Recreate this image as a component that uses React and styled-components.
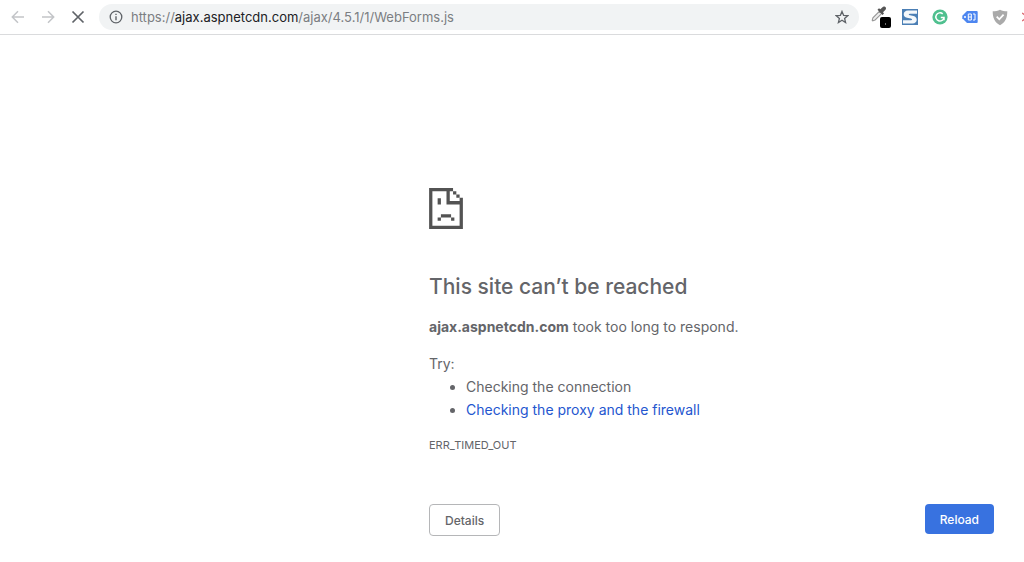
import React from "react";
import styled, { createGlobalStyle } from "styled-components";

const GlobalStyle = createGlobalStyle`
  * {
    box-sizing: border-box;
  }

  body {
    margin: 0;
    background: #fff;
    color: #646569;
    font-family: Inter, Roboto, "Liberation Sans", sans-serif;
    overflow-x: hidden;
  }
`;

const Toolbar = styled.header`
  display: flex;
  align-items: center;
  height: 35px;
  padding-left: 8px;
  border-bottom: 1px solid #dadbdd;
  overflow: hidden;
`;

const IconButton = styled.button`
  display: flex;
  flex: none;
  align-items: center;
  justify-content: ${props => (props.$clipped ? "flex-start" : "center")};
  width: ${props => props.$width || 30}px;
  height: 26px;
  padding: 0;
  border: 0;
  background: none;
  color: ${props => props.$color || "#5f6368"};

  svg {
    display: block;
    flex: none;
  }
`;

const AddressBar = styled.div`
  display: flex;
  flex: 1;
  align-items: center;
  gap: 8px;
  height: 26px;
  margin: 0 6px 0 11px;
  padding: 0 2px 0 10px;
  border-radius: 13px;
  background: #f1f3f4;
`;

const Url = styled.div`
  flex: 1;
  color: #7b7e82;
  font-size: 13px;
  line-height: 20px;
  white-space: nowrap;

  span {
    color: #202124;
  }
`;

const Page = styled.main`
  display: flex;
  justify-content: flex-end;
  padding: 153px 30px 24px;
`;

const Content = styled.div`
  width: 100%;
  max-width: 566px;
  padding-left: 1px;
`;

const SadPage = styled.svg`
  display: block;
  width: 34px;
  height: 41px;
`;

const Heading = styled.h1`
  margin: 43px 0 0;
  font-size: 21px;
  font-weight: 500;
  line-height: 30px;
`;

const Text = styled.p`
  margin: ${props => props.$top}px 0 0;
  font-size: ${props => (props.$small ? 11 : 14)}px;
  line-height: 22px;
`;

const Suggestions = styled.ul`
  margin: 0;
  padding-left: 37px;
  font-size: 14px;
  line-height: 23px;

  a {
    color: #2456cf;
    text-decoration: none;
  }
`;

const Actions = styled.div`
  display: flex;
  align-items: flex-start;
  justify-content: space-between;
  margin-top: 48px;
`;

const Button = styled.button`
  height: ${props => (props.$primary ? 30 : 32)}px;
  padding: 0 15px;
  border: ${props => (props.$primary ? "0" : "1px solid #b5b6b8")};
  border-radius: 4px;
  background: ${props => (props.$primary ? "#3872e0" : "#fff")};
  color: ${props => (props.$primary ? "#fff" : "#646569")};
  font-family: inherit;
  font-size: 12px;
  font-weight: 500;
`;

const Arrow = ({ forward }) => (
  <svg width="14" height="14" viewBox="0 0 14 14" fill="none" stroke="currentColor" strokeWidth="1.5">
    <path d={forward ? "M1 7h11.5M7 1.3 12.7 7 7 12.7" : "M13 7H1.5M7 1.3 1.3 7 7 12.7"} />
  </svg>
);

const Close = () => (
  <svg width="14" height="14" viewBox="0 0 14 14" fill="none" stroke="currentColor" strokeWidth="1.7">
    <path d="M1.5 1.5l11 11M12.5 1.5l-11 11" />
  </svg>
);

const Info = () => (
  <svg width="14" height="14" viewBox="0 0 14 14" fill="none" stroke="#5f6368">
    <circle cx="7" cy="7" r="5.8" strokeWidth="1.3" />
    <path d="M7 6.2v4M7 3.7v1.4" strokeWidth="1.4" />
  </svg>
);

const Star = () => (
  <svg width="14" height="14" viewBox="0 0 14 14" fill="none" stroke="currentColor" strokeWidth="1.3">
    <path d="M7 1.4l1.6 3.9 4.2.3-3.2 2.8 1 4.1L7 10.3l-3.6 2.2 1-4.1-3.2-2.8 4.2-.3z" />
  </svg>
);

const Picker = () => (
  <svg width="22" height="24" viewBox="0 0 22 24">
    <path d="M3.2 15.3l.7-2.4 6.5-6.5 2.2 2.2-6.5 6.4-2.4.8z" fill="#eee" stroke="#999" strokeWidth="1.1" />
    <path d="M8.500 4.800l1.500-1.500 1.300 1 2.200-2.100c1.700-1.700 4.800.6 3 2.600l-2.500 2.400 1 1.200-1.500 1.500z" fill="#555" />
    <rect x="11" y="12" width="11" height="11" rx="2" />
    <path d="M16 18.500h1v1h-1z" fill="#ddd" />
  </svg>
);

const Snippet = () => (
  <svg width="16" height="16" viewBox="0 0 16 16">
    <path fill="#4b7fb5" d="M0 0h16v16H0z" />
    <path
      fill="#f4f8fb"
      d="M15 1.500v3.300H8C6.300 4.800 6.300 6 8 6.300l3.500.7c4.700 1 4.200 7.500-1 7.500H1v-3.300h7.500c2 0 2.200-1.300.3-1.700L5 8.700C.2 7.700.8 1.500 6 1.500z"
    />
  </svg>
);

const Grammar = () => (
  <svg width="16" height="16" viewBox="0 0 16 16">
    <circle cx="8" cy="8" r="7.6" fill="#4fc08f" />
    <path d="M10.7 4.9A4.1 4.1 0 1 0 12 8.500H8.800M12 8.500v2.700" fill="none" stroke="#fff" strokeWidth="1.5" />
  </svg>
);

const Tag = () => (
  <svg width="16" height="14" viewBox="0 0 16 14">
    <path d="M5 1h9.5c.8 0 1.2.4 1.2 1.2v9.600c0 .8-.4 1.200-1.200 1.200H5L.3 8.200V5.800z" fill="#4d86f0" />
    <circle cx="3" cy="7" r="1" fill="#fff" />
    <path d="M6.300 4v6h3V4zM6.300 7h3M11 4h2v6h-2" fill="none" stroke="#fff" strokeWidth="1" />
  </svg>
);

const Shield = () => (
  <svg width="16" height="17" viewBox="0 0 16 17">
    <path d="M8 .8c2.200 1.200 4.500 1.500 7.300 1.500 0 6.500-1.800 11-7.300 13.900C2.500 13.300.7 8.800.7 2.300 3.500 2.300 5.800 2 8 .8z" fill="#aaa" />
    <path d="M4.700 7.600l2.600 2.700 4.300-4.700" fill="none" stroke="#fff" strokeWidth="1.8" />
  </svg>
);

const Clipped = () => (
  <svg width="12" height="12" viewBox="0 0 12 12" fill="none" stroke="#dc6b72" strokeWidth="1.4">
    <path d="M0 2l3 2M0 10l3-2" />
  </svg>
);

export default function App() {
  return (
    <>
      <GlobalStyle />
      <Toolbar>
        <IconButton $width={20} $color="#c3c5c8" aria-label="Back" disabled>
          <Arrow />
        </IconButton>
        <IconButton $width={40} $color="#c3c5c8" aria-label="Forward" disabled>
          <Arrow forward />
        </IconButton>
        <IconButton $width={20} aria-label="Stop loading">
          <Close />
        </IconButton>
        <AddressBar>
          <Info />
          <Url>
            https://<span>ajax.aspnetcdn.com</span>/ajax/4.5.1/1/WebForms.js
          </Url>
          <IconButton aria-label="Bookmark this page">
            <Star />
          </IconButton>
        </AddressBar>
        <IconButton aria-label="Colour picker">
          <Picker />
        </IconButton>
        <IconButton aria-label="Snippets">
          <Snippet />
        </IconButton>
        <IconButton aria-label="Grammar check">
          <Grammar />
        </IconButton>
        <IconButton aria-label="Tags">
          <Tag />
        </IconButton>
        <IconButton aria-label="Protection">
          <Shield />
        </IconButton>
        <IconButton $width={9} $clipped aria-label="More extensions">
          <svg width="7" height="12" />
          <Clipped />
        </IconButton>
      </Toolbar>
      <Page>
        <Content>
          <SadPage viewBox="0 0 103 125" fill="#535353" aria-hidden="true">
            <path d="M0 0h73v10h10v10h10v10h10v95H0zM10 10v105h83V50H53V10zM63 10v30h30V30H83V20H73V10z" fillRule="evenodd" />
            <path d="M26 31h10v19H26zM36 80h31v10H36zM26 90h10v10H26zM67 90h10v10H67z" />
          </SadPage>
          <Heading>This site can’t be reached</Heading>
          <Text $top={14}>
            <b>ajax.aspnetcdn.com</b> took too long to respond.
          </Text>
          <Text $top={15}>Try:</Text>
          <Suggestions>
            <li>Checking the connection</li>
            <li>
              <a href="#proxy">Checking the proxy and the firewall</a>
            </li>
          </Suggestions>
          <Text $small $top={13}>ERR_TIMED_OUT</Text>
          <Actions>
            <Button type="button">Details</Button>
            <Button type="button" $primary>Reload</Button>
          </Actions>
        </Content>
      </Page>
    </>
  );
}
